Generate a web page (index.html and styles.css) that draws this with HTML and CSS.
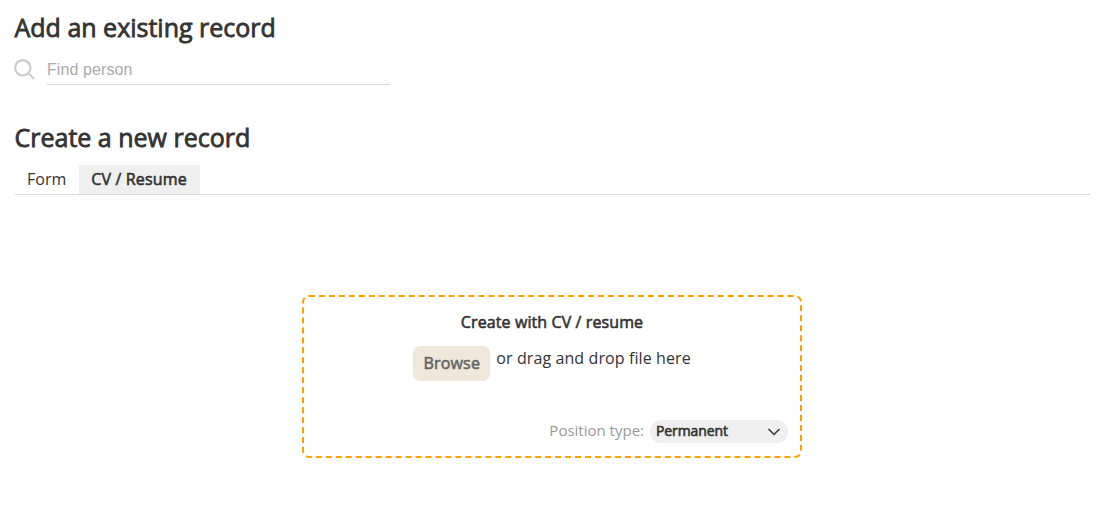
FILE: index.html
```html
<!DOCTYPE html>
<html lang="en">
<head>
  <meta charset="UTF-8" />
  <meta name="viewport" content="width=device-width, initial-scale=1.0"/>
  <title>Add record</title>
  <link rel="stylesheet" href="styles.css">
</head>
<body>

  <h2>Add an existing record</h2>
  <div class="search">
    <svg class="search-icon" viewBox="0 0 22 22" width="22" height="22">
      <circle cx="8.8" cy="8.8" r="7.7" />
      <path d="M14.3 14.3 L20 20" />
    </svg>
    <input type="text" name="person" placeholder="Find person" />
  </div>

  <h2 class="create-title">Create a new record</h2>
  <div class="tabs">
    <a class="tab">Form</a>
    <a class="tab active">CV / Resume</a>
  </div>

  <!-- Upload area -->
  <div class="drop-zone">
    <div class="drop-title">Create with CV / resume</div>
    <div class="drop-row">
      <button type="button">Browse</button>
      <span>or drag and drop file here</span>
    </div>
    <div class="position">
      <span>Position type:</span>
      <div class="select">
        <span>Permanent</span>
        <svg viewBox="0 0 14 8" width="14" height="8"><path d="M1.5 1 L7 6.5 L12.5 1" /></svg>
      </div>
    </div>
  </div>

</body>
</html>
```
FILE: styles.css
```css
body {
  margin: 0;
  padding: 9px 9px 0 14px;
  font-family: 'Open Sans', sans-serif;
  font-size: 16px;
  color: #333;
  background-color: #fff;
}

h2 {
  margin: 0;
  padding-left: 0.5px;
  font-size: 25px;
  line-height: 36px;
  font-weight: 400;
  -webkit-text-stroke: 0.8px #333;
}

.search {
  display: flex;
  height: 40px;
}

.search-icon {
  margin: 14px 11px 0 0;
  fill: none;
  stroke: #ccc;
  stroke-width: 2.2;
}

.search input {
  box-sizing: border-box;
  width: 343px;
  height: 31px;
  margin-top: 9px;
  padding: 2px 0 0;
  border: none;
  border-bottom: 1px solid #dadada;
  font-family: 'Liberation Sans', sans-serif;
  font-size: 16px;
  letter-spacing: 0.1px;
}

.search input::placeholder {
  color: #aaa;
}

.create-title {
  margin-top: 34px;
}

.tabs {
  display: flex;
  margin: 10px 0 0 1px;
  border-bottom: 1px solid #dadada;
}

.tab {
  padding: 0 13px 0 12px;
  line-height: 29px;
}

.tab.active {
  background-color: #efefef;
  letter-spacing: 0.15px;
  -webkit-text-stroke: 0.6px #333;
}

.drop-zone {
  box-sizing: border-box;
  width: 500px;
  height: 163px;
  margin: 100px auto 0;
  padding: 14px 12px 12px;
  border: 2px dashed #ffa000;
  border-radius: 7px;
}

.drop-title {
  line-height: 22px;
  text-align: center;
  letter-spacing: 0.1px;
  -webkit-text-stroke: 0.6px #333;
}

.drop-row {
  display: flex;
  justify-content: center;
  gap: 6px;
  margin-top: 13px;
  line-height: 24px;
  letter-spacing: 0.1px;
}

button {
  width: 77px;
  height: 35px;
  padding: 0 0 2px;
  border: none;
  border-radius: 7px;
  background-color: #f0e7db;
  color: #666;
  font-family: inherit;
  font-size: 16px;
  letter-spacing: 0.2px;
  -webkit-text-stroke: 0.6px #666;
}

.position {
  display: flex;
  justify-content: flex-end;
  gap: 6px;
  margin-top: 39px;
  font-size: 15px;
  line-height: 20px;
  color: #999;
}

.select {
  box-sizing: border-box;
  display: flex;
  justify-content: space-between;
  align-items: center;
  width: 138px;
  height: 23px;
  padding: 0 7px 0 6px;
  border-radius: 12px;
  background-color: #efefef;
  color: #333;
  font-size: 14px;
  letter-spacing: -0.1px;
  -webkit-text-stroke: 0.6px #333;
}

.select span {
  padding-bottom: 1px;
}

.select svg {
  fill: none;
  stroke: #333;
  stroke-width: 1.5;
}
```
